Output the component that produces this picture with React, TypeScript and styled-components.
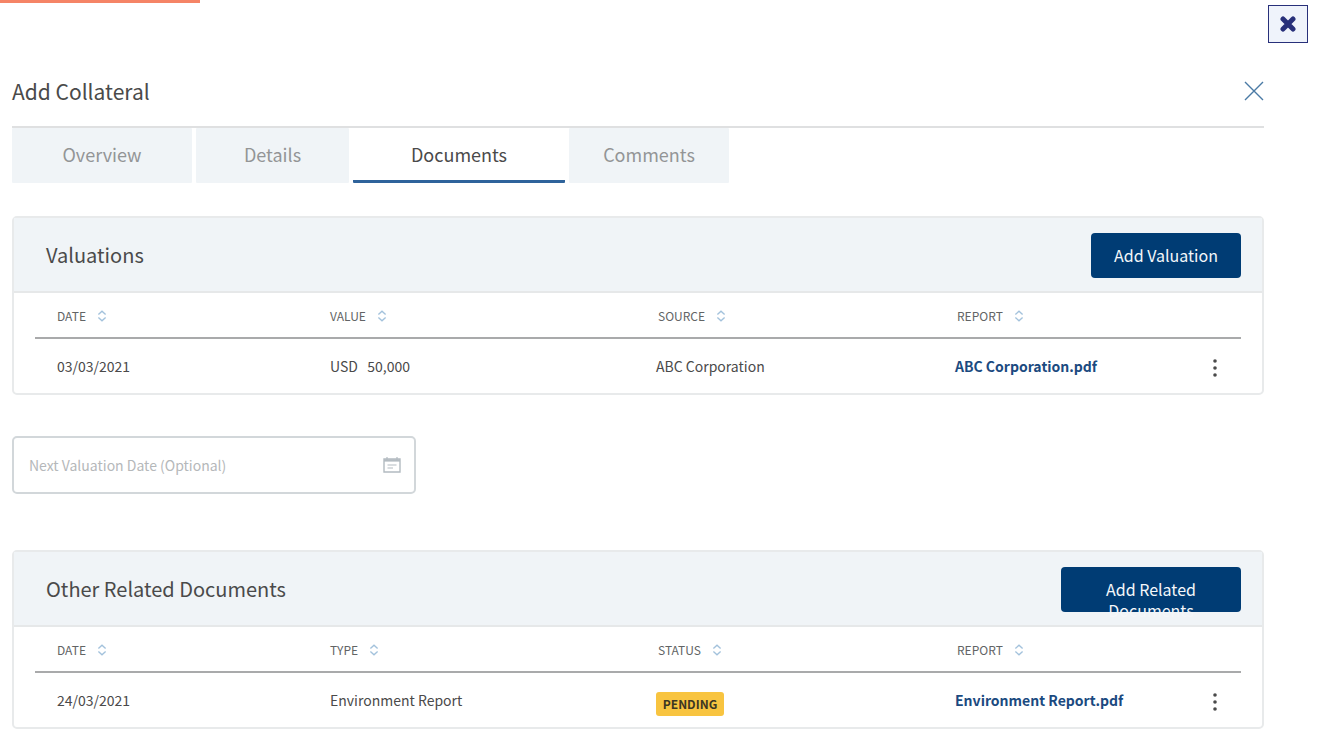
import React from "react";
import styled, { createGlobalStyle } from "styled-components";

const GlobalStyle = createGlobalStyle`
  *, *::before, *::after { box-sizing: border-box; }
  body {
    margin: 0;
    background: #fff;
    color: #4a4a4a;
    font-family: "Noto Sans CJK SC", "Open Sans", sans-serif;
  }
  button, input { font-family: inherit; color: inherit; }
`;

const Progress = styled.div`
  width: 200px;
  height: 3px;
  background: #f58466;
`;

const TopBar = styled.div`
  display: flex;
  justify-content: flex-end;
  padding: 2px 16px 0;
`;

const CloseBox = styled.button`
  display: flex;
  align-items: center;
  justify-content: center;
  width: 40px;
  height: 38px;
  padding: 0;
  border: 1px solid #28307a;
  background: #eff3fb;
  cursor: pointer;
`;

const Page = styled.main`
  padding: 28px 60px 20px 12px;
`;

const TitleBar = styled.header`
  display: flex;
  align-items: center;
  justify-content: space-between;
  height: 57px;
  padding-bottom: 16px;
  border-bottom: 2px solid #dfe0e1;
`;

const Title = styled.h1`
  margin: 0;
  font-size: 21px;
  line-height: 28px;
  font-weight: 400;
`;

const IconButton = styled.button`
  display: inline-flex;
  align-items: center;
  justify-content: center;
  padding: 0;
  border: 0;
  background: none;
  vertical-align: middle;
  cursor: pointer;
`;

const Tabs = styled.nav`
  display: flex;
  gap: 4px;
  margin-bottom: 33px;
`;

const Tab = styled.button<{ $width: number; $active?: boolean }>`
  width: ${(p) => p.$width}px;
  height: 55px;
  padding: 0;
  border: 0;
  border-bottom: 3px solid ${(p) => (p.$active ? "#2f639b" : "#f0f4f7")};
  border-radius: 1px;
  background: ${(p) => (p.$active ? "#fff" : "#f0f4f7")};
  color: ${(p) => (p.$active ? "#4a4a4a" : "#939596")};
  font-size: 18px;
  line-height: 28px;
  cursor: pointer;
`;

const Card = styled.section`
  border: 2px solid #e8eaeb;
  border-radius: 5px;
`;

const CardHeader = styled.div`
  display: flex;
  align-items: center;
  justify-content: space-between;
  height: 75px;
  padding: 0 21px 0 32px;
  border-bottom: 2px solid #e6e8e9;
  background: #f0f4f7;
`;

const CardTitle = styled.h2`
  margin: 0;
  font-size: 20px;
  line-height: 28px;
  font-weight: 400;
`;

const PrimaryButton = styled.button<{ $width: number }>`
  display: flex;
  align-items: flex-start;
  justify-content: center;
  width: ${(p) => p.$width}px;
  height: 45px;
  margin-top: 2px;
  padding: 12px 20px 0;
  border: 0;
  border-radius: 4px;
  background: #003c74;
  color: #f4f7fa;
  font-size: 16px;
  line-height: 21px;
  text-align: center;
  cursor: pointer;
`;

const TableWrap = styled.div`
  padding: 0 21px;
`;

const Table = styled.table`
  width: 100%;
  table-layout: fixed;
  border-collapse: collapse;
`;

const Col = styled.col<{ $width: number }>`
  width: ${(p) => p.$width}px;
`;

const HeadCell = styled.th`
  height: 45px;
  padding: 0 0 0 22px;
  border-bottom: 2px solid #a9aaab;
  color: #626465;
  font-size: 12px;
  line-height: 20px;
  font-weight: 400;
  text-align: left;

  &:nth-child(n + 3) { padding-left: 24px; }
`;

const SortButton = styled(IconButton)`
  gap: 11px;
  font-size: 12px;
  line-height: 20px;
`;

const Cell = styled.td`
  height: 55px;
  padding: 0 0 0 22px;
  font-size: 14px;
  line-height: 20px;
  white-space: pre;

  &:last-child { padding: 0 23px 0 0; text-align: right; }
`;

const FileLink = styled.a`
  color: #1b4a80;
  font-weight: 700;
  text-decoration: none;
`;

const Badge = styled.span`
  display: block;
  width: 68px;
  margin-top: 8px;
  border-radius: 3px;
  background: #f8c440;
  color: #3d3723;
  font-size: 12px;
  line-height: 24px;
  font-weight: 700;
  text-align: center;
`;

const DateField = styled.div`
  display: flex;
  align-items: center;
  width: 404px;
  max-width: 100%;
  height: 58px;
  margin: 41px 0 56px;
  padding: 0 13px 0 15px;
  border: 2px solid #d2d7da;
  border-radius: 5px;
`;

const DateInput = styled.input`
  flex: 1;
  min-width: 0;
  padding: 0;
  border: 0;
  outline: 0;
  background: none;
  font-size: 14px;
  line-height: 20px;

  &::placeholder { color: #b5b8ba; opacity: 1; }
`;

const SortIcon = () => (
  <svg width="10" height="12" viewBox="0 0 10 12" fill="none" stroke="#a3c2dc" strokeWidth="1.4" aria-hidden="true">
    <path d="M1.4 4.4 5 1.2l3.6 3.2M1.4 7.6 5 10.8l3.6-3.2" />
  </svg>
);

const DotsIcon = () => (
  <svg width="6" height="18" viewBox="0 0 6 18" fill="#4a4a4a" aria-hidden="true">
    <circle cx="3" cy="2" r="1.8" />
    <circle cx="3" cy="9" r="1.8" />
    <circle cx="3" cy="16" r="1.8" />
  </svg>
);

const CalendarIcon = () => (
  <svg width="18" height="16" viewBox="0 0 18 16" fill="none" stroke="#b3bbc1" aria-hidden="true">
    <path d="M1 2h16v13H1z" strokeWidth="1.4" />
    <path d="M1 3.4h16" strokeWidth="2.4" />
    <path d="M4 0v3M14 0v3" strokeWidth="1.2" />
    <path d="M4.5 8h9M4.5 11h5.5" strokeWidth="1.2" />
  </svg>
);

type Row = { date: string; second: string; third: React.ReactNode; file: string };

const DocumentCard = ({
  title,
  action,
  actionWidth,
  heads,
  rows,
}: {
  title: string;
  action: string;
  actionWidth: number;
  heads: string[];
  rows: Row[];
}) => (
  <Card>
    <CardHeader>
      <CardTitle>{title}</CardTitle>
      <PrimaryButton type="button" $width={actionWidth}>{action}</PrimaryButton>
    </CardHeader>
    <TableWrap>
      <Table aria-label={title}>
        <colgroup>
          <Col $width={273} />
          <Col $width={326} />
          <Col $width={299} />
          <Col $width={240} />
          <Col $width={68} />
        </colgroup>
        <thead>
          <tr>
            {heads.map((h) => (
              <HeadCell key={h} scope="col">
                <SortButton type="button">{h}<SortIcon /></SortButton>
              </HeadCell>
            ))}
            <HeadCell as="td" />
          </tr>
        </thead>
        <tbody>
          {rows.map((r) => (
            <tr key={r.file}>
              <Cell>{r.date}</Cell>
              <Cell>{r.second}</Cell>
              <Cell>{r.third}</Cell>
              <Cell><FileLink href="#">{r.file}</FileLink></Cell>
              <Cell>
                <IconButton type="button" aria-label={"Actions for " + r.file}><DotsIcon /></IconButton>
              </Cell>
            </tr>
          ))}
        </tbody>
      </Table>
    </TableWrap>
  </Card>
);

export default function App() {
  return (
    <>
      <GlobalStyle />
      <Progress />
      <TopBar>
        <CloseBox type="button" aria-label="Close window">
          <svg width="16" height="16" viewBox="0 0 16 16" stroke="#28307a" strokeWidth="5" strokeLinecap="round" aria-hidden="true">
            <path d="M3 3l10 10M13 3 3 13" />
          </svg>
        </CloseBox>
      </TopBar>
      <Page>
        <TitleBar>
          <Title>Add Collateral</Title>
          <IconButton type="button" aria-label="Close">
            <svg width="20" height="20" viewBox="0 0 20 20" stroke="#4a7aa5" strokeWidth="1.4" aria-hidden="true">
              <path d="M1 1l18 18M19 1 1 19" />
            </svg>
          </IconButton>
        </TitleBar>
        <Tabs>
          <Tab type="button" $width={180}>Overview</Tab>
          <Tab type="button" $width={153}>Details</Tab>
          <Tab type="button" $width={212} $active>Documents</Tab>
          <Tab type="button" $width={160}>Comments</Tab>
        </Tabs>
        <DocumentCard
          title="Valuations"
          action="Add Valuation"
          actionWidth={150}
          heads={["DATE", "VALUE", "SOURCE", "REPORT"]}
          rows={[{ date: "03/03/2021", second: "USD   50,000", third: "ABC Corporation", file: "ABC Corporation.pdf" }]}
        />
        <DateField>
          <DateInput type="text" aria-label="Next Valuation Date" placeholder="Next Valuation Date (Optional)" />
          <IconButton type="button" aria-label="Choose date"><CalendarIcon /></IconButton>
        </DateField>
        <DocumentCard
          title="Other Related Documents"
          action="Add Related Documents"
          actionWidth={180}
          heads={["DATE", "TYPE", "STATUS", "REPORT"]}
          rows={[{ date: "24/03/2021", second: "Environment Report", third: <Badge>PENDING</Badge>, file: "Environment Report.pdf" }]}
        />
      </Page>
    </>
  );
}
